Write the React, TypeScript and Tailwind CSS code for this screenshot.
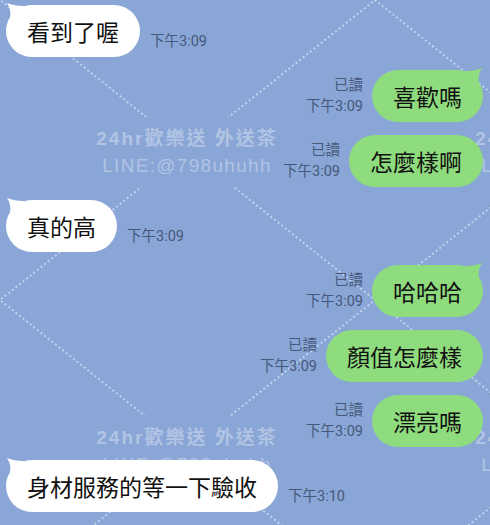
import React from "react";

type Msg = { side: "l" | "r"; text: string; time: string; tail?: boolean };

const messages: Msg[] = [
  { side: "l", text: "看到了喔", time: "下午3:09", tail: true },
  { side: "r", text: "喜歡嗎", time: "下午3:09", tail: true },
  { side: "r", text: "怎麼樣啊", time: "下午3:09" },
  { side: "l", text: "真的高", time: "下午3:09", tail: true },
  { side: "r", text: "哈哈哈", time: "下午3:09", tail: true },
  { side: "r", text: "顏值怎麼樣", time: "下午3:09" },
  { side: "r", text: "漂亮嗎", time: "下午3:09" },
  { side: "l", text: "身材服務的等一下驗收", time: "下午3:10", tail: true },
];

const spots = [
  { x: 187, y: 125 },
  { x: 566, y: 125 },
  { x: 187, y: 424 },
  { x: 566, y: 424 },
];

function Lattice() {
  const lines: JSX.Element[] = [];
  for (let k = -1; k <= 3; k++) {
    // y = 0.8x + 300k and y = -0.8x + 300k
    lines.push(<line key={"a" + k} x1={-200} y1={-160 + 300 * k} x2={800} y2={640 + 300 * k} />);
    lines.push(<line key={"b" + k} x1={-200} y1={160 + 300 * k} x2={800} y2={-640 + 300 * k} />);
  }
  return (
    <svg className="absolute inset-0" width="490" height="525" viewBox="0 0 490 525">
      <defs>
        <mask id="gap">
          <rect x="0" y="0" width="490" height="525" fill="white" />
          {spots.map((s, i) => (
            <rect key={i} x={s.x - 110} y={s.y - 8} width="220" height="70" fill="black" />
          ))}
        </mask>
      </defs>
      <g mask="url(#gap)" stroke="#dbe6f7" strokeOpacity="0.75" strokeWidth="1.8" strokeDasharray="2 2.6">
        {lines}
      </g>
    </svg>
  );
}

function Watermarks() {
  return (
    <>
      {spots.map((s, i) => (
        <div
          key={i}
          className="absolute w-[300px] text-center text-white/35 leading-[27px] font-['Liberation_Sans','Noto_Sans_CJK_TC',sans-serif]"
          style={{ left: s.x - 150, top: s.y }}
        >
          <div className="text-[19px] font-bold tracking-[2px]">24hr歡樂送 外送茶</div>
          <div className="text-[19px] tracking-[1.3px]">LINE:@798uhuhh</div>
        </div>
      ))}
    </>
  );
}

function Tail({ side, fill }: { side: "l" | "r"; fill: string }) {
  return (
    <svg
      className={
        side === "l"
          ? "absolute left-0 top-[-3px]"
          : "absolute right-0 top-[-3px] -scale-x-100"
      }
      width="18"
      height="16"
      viewBox="0 0 18 16"
    >
      <path d="M1 1 C6 3 11 4 18 4 L18 16 L4 16 C5 10 4 5 1 1 Z" fill={fill} />
    </svg>
  );
}

function Bubble({ m }: { m: Msg }) {
  const green = m.side === "r";
  return (
    <div
      className={
        "relative flex h-[52px] shrink-0 items-center rounded-full px-[21px] text-[23px] text-[#111] " +
        (green ? "bg-[#8fdc7e]" : "bg-white")
      }
    >
      {m.tail && <Tail side={m.side} fill={green ? "#8fdc7e" : "#ffffff"} />}
      <span className="relative">{m.text}</span>
    </div>
  );
}

export default function App() {
  return (
    <div className="relative h-[525px] w-[490px] overflow-hidden bg-[#8aa6d6] font-['Noto_Sans_CJK_TC',sans-serif]">
      <Lattice />
      <Watermarks />

      <div className="relative flex flex-col gap-[13px] pl-[6px] pr-[7px] pt-[5px]">
        {messages.map((m, i) =>
          m.side === "l" ? (
            <div key={i} className="flex items-end gap-[10px]">
              <Bubble m={m} />
              <div className="mb-[5px] text-[14.5px] leading-[21px] text-[#46597a] font-['Roboto','Noto_Sans_CJK_TC',sans-serif]">
                {m.time}
              </div>
            </div>
          ) : (
            <div key={i} className="flex items-end justify-end gap-[9px]">
              <div className="mb-[5px] flex flex-col items-end text-[14.5px] leading-[21px] text-[#46597a] font-['Roboto','Noto_Sans_CJK_TC',sans-serif]">
                <span>已讀</span>
                <span>{m.time}</span>
              </div>
              <Bubble m={m} />
            </div>
          )
        )}
      </div>
    </div>
  );
}
